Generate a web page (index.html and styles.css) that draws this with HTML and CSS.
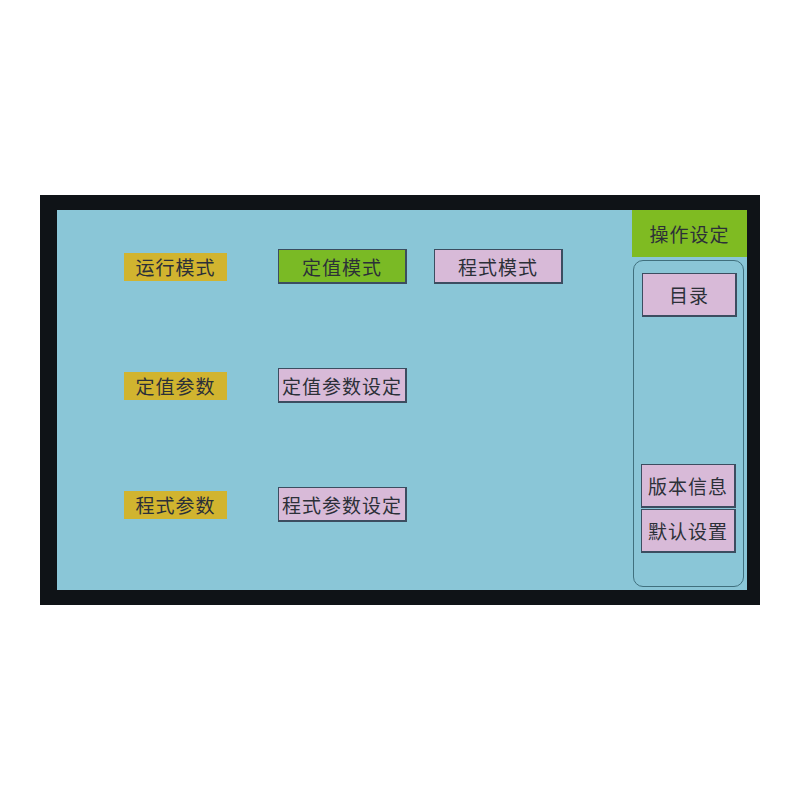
FILE: index.html
```html
<!DOCTYPE html>
<html lang="zh-CN">
<head>
<meta charset="utf-8">
<title>操作设定</title>
<link rel="stylesheet" href="styles.css">
</head>
<body>
<div class="bezel">
  <div class="screen">
    <div class="main">
      <div class="grid">
        <div class="label">运行模式</div>
        <div class="btn green">定值模式</div>
        <div class="btn pink">程式模式</div>

        <div class="label">定值参数</div>
        <div class="btn pink">定值参数设定</div>
        <div></div>

        <div class="label">程式参数</div>
        <div class="btn pink">程式参数设定</div>
        <div></div>
      </div>
    </div>
    <div class="side">
      <div class="side-head">操作设定</div>
      <div class="side-panel">
        <div class="btn pink side-btn menu">目录</div>
        <div class="side-bottom">
          <div class="btn pink side-btn">版本信息</div>
          <div class="btn pink side-btn">默认设置</div>
        </div>
      </div>
    </div>
  </div>
</div>
</body>
</html>
```

FILE: styles.css
```css
html, body {
  margin: 0;
  padding: 0;
  background: #ffffff;
}

body {
  width: 800px;
  height: 800px;
  font-family: "Noto Sans CJK SC", "Noto Sans", sans-serif;
  color: #2c3038;
}

.bezel {
  margin: 195px 0 0 40px;
  width: 720px;
  height: 410px;
  box-sizing: border-box;
  padding: 15px 13px 15px 17px;
  background: #0f1317;
}

.screen {
  width: 690px;
  height: 380px;
  background: #8ac6d7;
  display: flex;
  justify-content: space-between;
}

.main {
  padding: 39px 0 0 67px;
}

.grid {
  display: grid;
  grid-template-columns: 154px 156px 129px;
  grid-template-rows: 35px 35px 35px;
  row-gap: 84px;
  align-items: center;
  justify-items: start;
}

.label {
  width: 103px;
  height: 28px;
  background: #d1b42f;
  display: flex;
  align-items: center;
  justify-content: center;
  font-size: 19px;
  letter-spacing: 1px;
  line-height: 1;
}

.btn {
  width: 129px;
  height: 35px;
  box-sizing: border-box;
  border: 1px solid #3c4d60;
  border-right-width: 2px;
  border-bottom-width: 2px;
  display: flex;
  align-items: center;
  justify-content: center;
  font-size: 19px;
  line-height: 1;
  letter-spacing: 1px;
}

.green {
  background: #7aba25;
}

.pink {
  background: #d8bad8;
}

.side {
  width: 115px;
  display: flex;
  flex-direction: column;
}

.side-head {
  height: 47px;
  background: #7fbb22;
  display: flex;
  align-items: center;
  justify-content: center;
  font-size: 19px;
  letter-spacing: 1px;
}

.side-panel {
  margin: 3px 3px 3px 1px;
  flex: 1;
  border: 1px solid #40707e;
  border-radius: 10px;
  box-sizing: border-box;
  padding: 12px 6px 33px 7px;
  display: flex;
  flex-direction: column;
  justify-content: space-between;
}

.side-btn {
  height: 44px;
  width: 95px;
}

.menu {
  margin-left: 1px;
}

.side-bottom {
  display: flex;
  flex-direction: column;
  gap: 1px;
}
```
